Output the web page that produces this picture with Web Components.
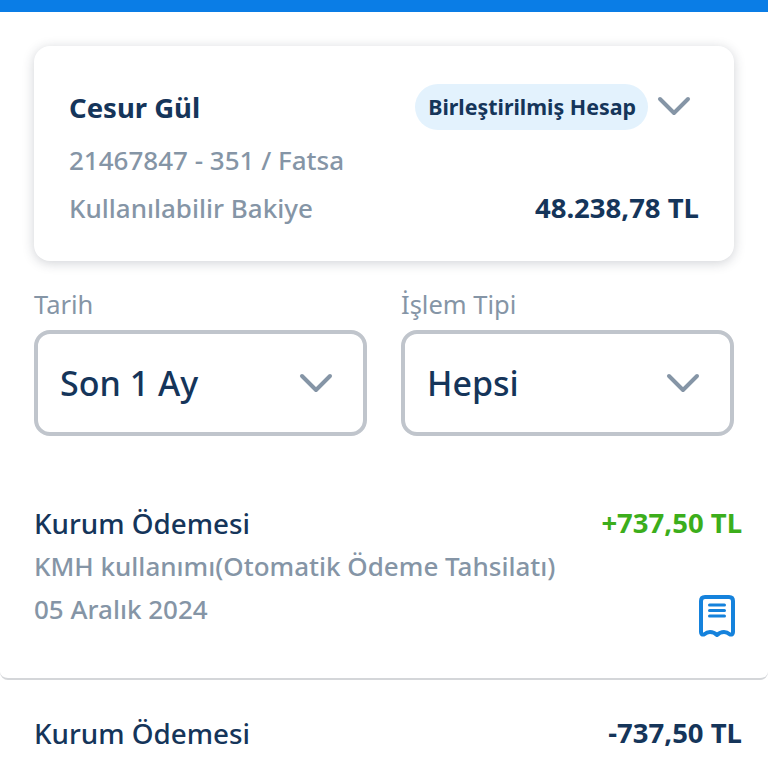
<!DOCTYPE html>
<html lang="tr">
<head>
<meta charset="utf-8">
<title>Hesap Hareketleri</title>
<style>
    html, body {
        margin: 0;
        height: 768px;
        overflow: hidden;
        background: white;
        font-family: "Noto Sans", "Open Sans", sans-serif;
        color: #15355a;
    }

    .page {
        height: 768px;
        overflow: hidden;
    }
</style>
</head>
<body>

<template id="account-card-template">
    <style>
        :host {
            display: block;
            margin: 34px 34px 0;
            padding: 37px 35px 0;
            height: 215px;
            box-sizing: border-box;
            background: white;
            border-radius: 16px;
            box-shadow: 0 2px 12px rgba(40, 50, 70, 0.22);
        }

        .row {
            display: flex;
            justify-content: space-between;
            align-items: center;
        }

        .name {
            font-size: 27.5px;
            font-weight: 700;
            line-height: 46px;
            margin-top: 2px;
        }

        .right {
            display: flex;
            align-items: center;
            gap: 9px;
            margin-right: 8px;
        }

        .badge {
            background: #e3f2fd;
            border-radius: 23px;
            font-size: 21.4px;
            font-weight: 700;
            line-height: 46px;
            padding: 0 12px 0 13px;
        }

        svg {
            display: block;
            margin-top: -2px;
        }

        .number {
            color: #8595a6;
            font-size: 26px;
            font-weight: 500;
            line-height: 59px;
        }

        .balance-row {
            line-height: 36px;
        }

        .balance-label {
            color: #8595a6;
            font-size: 26px;
            font-weight: 500;
        }

        .balance {
            font-size: 27.5px;
            font-weight: 700;
        }
    </style>
    <div class="row">
        <div class="name"><slot name="name"></slot></div>
        <div class="right">
            <div class="badge"><slot name="badge"></slot></div>
            <svg width="34" height="22" viewBox="0 0 34 22" fill="none" stroke="#8595a6" stroke-width="4" stroke-linecap="round" stroke-linejoin="round">
                <path d="M3 4 L17 18 L31 4"/>
            </svg>
        </div>
    </div>
    <div class="number"><slot name="number"></slot></div>
    <div class="row balance-row">
        <div class="balance-label"><slot name="label"></slot></div>
        <div class="balance"><slot name="balance"></slot></div>
    </div>
</template>

<template id="select-box-template">
    <style>
        :host {
            display: block;
        }

        .label {
            color: #8595a6;
            font-size: 25.5px;
            line-height: 34px;
            margin-bottom: 9px;
        }

        .box {
            height: 106px;
            box-sizing: border-box;
            border: 4px solid #c0c5cc;
            border-radius: 16px;
            display: flex;
            align-items: center;
            justify-content: space-between;
            padding: 0 30px 0 22px;
            font-size: 34px;
            font-weight: 500;
            background: white;
        }

        svg {
            display: block;
        }
    </style>
    <div class="label"><slot name="label"></slot></div>
    <div class="box">
        <slot></slot>
        <svg width="34" height="22" viewBox="0 0 34 22" fill="none" stroke="#8595a6" stroke-width="4" stroke-linecap="round" stroke-linejoin="round">
            <path d="M3 4 L17 18 L31 4"/>
        </svg>
    </div>
</template>

<template id="tx-row-template">
    <style>
        :host {
            display: block;
            box-sizing: border-box;
            height: 210px;
            padding: 31px 26px 0 34px;
            border-bottom: 2px solid #d4d6d9;
            border-radius: 0 0 8px 8px;
        }

        .top {
            display: flex;
            justify-content: space-between;
            align-items: center;
            line-height: 44px;
        }

        .title {
            font-size: 27.8px;
            font-weight: 500;
        }

        .amount {
            font-size: 27.5px;
            font-weight: 700;
        }

        :host([positive]) .amount {
            color: #3cae1b;
        }

        .sub, .date {
            color: #8595a6;
            font-size: 26px;
            font-weight: 500;
            line-height: 43px;
            min-height: 43px;
        }

        .bottom {
            display: flex;
            justify-content: space-between;
            align-items: flex-start;
        }

        svg {
            display: block;
            margin: 7px 7px 0 0;
        }
    </style>
    <div class="top">
        <div class="title"><slot name="title"></slot></div>
        <div class="amount"><slot name="amount"></slot></div>
    </div>
    <div class="sub"><slot name="sub"></slot></div>
    <div class="bottom">
        <div class="date"><slot name="date"></slot></div>
        <svg width="36" height="42" viewBox="0 0 36 42" fill="none" stroke="#1582dc" stroke-width="4" stroke-linecap="round" stroke-linejoin="round">
            <path d="M6 2 H30 Q34 2 34 6 V37 Q34 40 31 39.5 Q28 37 25 37 Q21 37 18 40 Q15 37 11 37 Q8 37 5 39.5 Q2 40 2 37 V6 Q2 2 6 2 Z"/>
            <path d="M10.5 10 H25.5 M10.5 15.5 H25.5 M10.5 21 H25.5" stroke-width="3"/>
        </svg>
    </div>
</template>

<div class="page">
    <top-bar></top-bar>
    <account-card>
        <span slot="name">Cesur Gül</span>
        <span slot="badge">Birleştirilmiş Hesap</span>
        <span slot="number">21467847 - 351 / Fatsa</span>
        <span slot="label">Kullanılabilir Bakiye</span>
        <span slot="balance">48.238,78 TL</span>
    </account-card>
    <filter-row>
        <select-box><span slot="label">Tarih</span>Son 1 Ay</select-box>
        <select-box><span slot="label">İşlem Tipi</span>Hepsi</select-box>
    </filter-row>
    <tx-row positive>
        <span slot="title">Kurum Ödemesi</span>
        <span slot="amount">+737,50 TL</span>
        <span slot="sub">KMH kullanımı(Otomatik Ödeme Tahsilatı)</span>
        <span slot="date">05 Aralık 2024</span>
    </tx-row>
    <tx-row>
        <span slot="title">Kurum Ödemesi</span>
        <span slot="amount">-737,50 TL</span>
    </tx-row>
</div>

<script>
    class TemplateElement extends HTMLElement {
        connectedCallback() {
            if (this.shadowRoot) return;
            const shadowRoot = this.attachShadow({ mode: "open" });
            const template = document.getElementById(this.constructor.templateId).content;
            shadowRoot.appendChild(template.cloneNode(true));
        }
    }

    class AccountCard extends TemplateElement {}
    AccountCard.templateId = 'account-card-template';

    class SelectBox extends TemplateElement {}
    SelectBox.templateId = 'select-box-template';

    class TxRow extends TemplateElement {}
    TxRow.templateId = 'tx-row-template';

    class TopBar extends HTMLElement {
        connectedCallback() {
            this.attachShadow({ mode: "open" }).innerHTML = `
                <style>
                    :host {
                        display: block;
                        height: 12px;
                        background: #0a7de6;
                    }
                </style>`;
        }
    }

    class FilterRow extends HTMLElement {
        connectedCallback() {
            this.attachShadow({ mode: "open" }).innerHTML = `
                <style>
                    :host {
                        display: grid;
                        grid-template-columns: 333px 333px;
                        gap: 34px;
                        margin: 26px 34px 0;
                        height: 183px;
                    }
                </style>
                <slot></slot>`;
        }
    }

    customElements.define('top-bar', TopBar);
    customElements.define('account-card', AccountCard);
    customElements.define('filter-row', FilterRow);
    customElements.define('select-box', SelectBox);
    customElements.define('tx-row', TxRow);
</script>
</body>
</html>
